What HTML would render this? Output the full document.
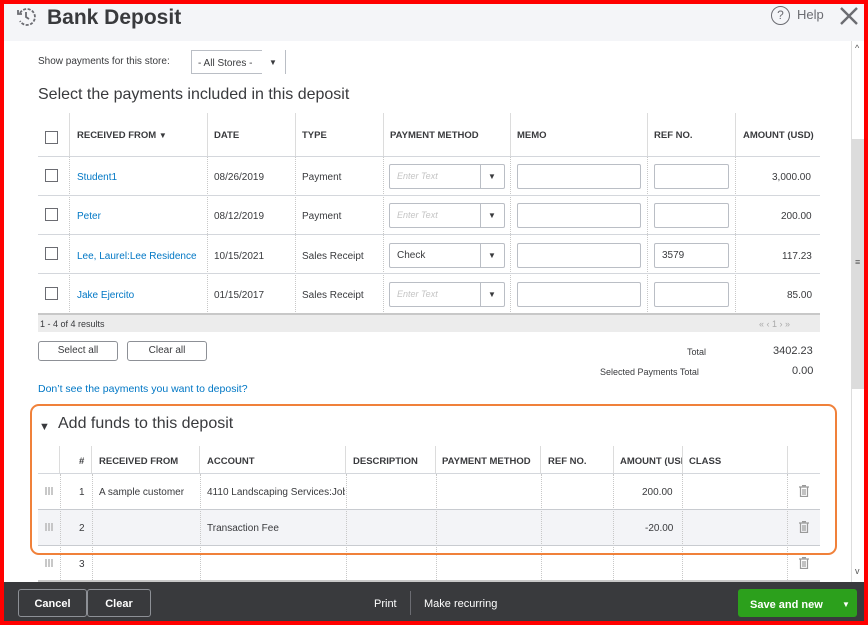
<!DOCTYPE html>
<html><head><meta charset="utf-8"><style>
*{box-sizing:border-box;margin:0;padding:0}
body{width:868px;height:625px;overflow:hidden;background:#fff;font-family:"Liberation Sans",sans-serif;color:#393a3d;position:relative}
.a{position:absolute}
.t{position:absolute;font-size:10px;white-space:nowrap;transform:translateY(1px)}
.h{position:absolute;font-size:9.5px;font-weight:bold;white-space:nowrap;color:#393a3d;transform:translateY(1px)}
.lnk{color:#0077c5}
.vl{position:absolute;border-left:1px dotted #c8c8c8}
.vs{position:absolute;border-left:1px solid #dcdcdc}
.hl{position:absolute;height:1px;background:#d4d7dc}
.cb{position:absolute;width:13px;height:13px;border:1px solid #6b6c72;background:#fff}
.in{position:absolute;height:25px;border:1px solid #babec5;background:#fff;border-radius:2px;font-size:10px;padding:6px 7px}
.ph{color:#c4c4c4;font-style:italic;font-size:9px}
.dd{position:absolute;font-size:8px}
.btn{position:absolute;border:1px solid #8d9096;border-radius:3px;background:#fff;font-size:10px;text-align:center;line-height:18px;height:20px}
.trash{position:absolute;width:10px;height:12px}
.grip{position:absolute;width:8px;height:8px;background:repeating-linear-gradient(90deg,#bbb 0 2px,transparent 2px 3px);opacity:.8}
</style></head><body>
<div class="a" style="left:0;top:0;width:868px;height:625px;border:4px solid #f00;z-index:10;pointer-events:none"></div>
<div class="a" style="left:4px;top:4px;width:860px;height:37px;background:#f4f5f8"></div>
<svg class="a" style="left:16px;top:7px" width="20" height="20" viewBox="0 0 20 20" fill="none" stroke="#6b6c72" stroke-width="1.8"><path d="M4 6A8 8 0 1 1 4 14" stroke-dasharray="3 1.5"/><path d="M10 5v5l3 2"/><path d="M2 3v4h4"/></svg>
<div class="a" style="left:47px;top:6px;font-size:21px;font-weight:bold;color:#393a3d">Bank Deposit</div>
<div class="a" style="left:771px;top:6px;width:19px;height:19px;border:1.8px solid #6b6c72;border-radius:50%;font-size:12px;text-align:center;line-height:16px;color:#6b6c72">?</div>
<div class="a" style="left:797px;top:7px;font-size:13px;color:#6b6c72">Help</div>
<svg class="a" style="left:839px;top:6px" width="20" height="20" viewBox="0 0 20 20" stroke="#6b6c72" stroke-width="2.4"><path d="M2 2L18 18M18 2L2 18"/></svg>
<div class="a" style="left:851px;top:41px;width:15px;height:541px;background:#fff;border-left:1px solid #ddd"></div>
<div class="a" style="left:852px;top:139px;width:13px;height:250px;background:#dcdcdc"></div>
<div class="t" style="left:855px;top:42px;font-size:9px;color:#555">^</div>
<div class="t" style="left:855px;top:565px;font-size:9px;color:#555">v</div>
<div class="t" style="left:855px;top:256px;font-size:9px;color:#555">≡</div>
<div class="t" style="left:38px;top:55px">Show payments for this store:</div>
<div class="a" style="left:191px;top:50px;width:71px;height:24px;border:1px solid #babec5;border-right:none;background:#fff"></div>
<div class="a" style="left:285px;top:50px;width:1px;height:24px;background:#babec5"></div>
<div class="t" style="left:198px;top:57px">- All Stores -</div>
<div class="dd" style="left:269px;top:58px">▼</div>
<div class="a" style="left:38px;top:86px;font-size:16px">Select the payments included in this deposit</div>
<div class="vs" style="left:69px;top:113px;height:43px"></div>
<div class="vs" style="left:207px;top:113px;height:43px"></div>
<div class="vs" style="left:295px;top:113px;height:43px"></div>
<div class="vs" style="left:383px;top:113px;height:43px"></div>
<div class="vs" style="left:510px;top:113px;height:43px"></div>
<div class="vs" style="left:647px;top:113px;height:43px"></div>
<div class="vs" style="left:735px;top:113px;height:43px"></div>
<div class="vl" style="left:69px;top:157px;height:157px"></div>
<div class="vl" style="left:207px;top:157px;height:157px"></div>
<div class="vl" style="left:295px;top:157px;height:157px"></div>
<div class="vl" style="left:383px;top:157px;height:157px"></div>
<div class="vl" style="left:510px;top:157px;height:157px"></div>
<div class="vl" style="left:647px;top:157px;height:157px"></div>
<div class="vl" style="left:735px;top:157px;height:157px"></div>
<div class="cb" style="left:45px;top:131px"></div>
<div class="h" style="left:77px;top:129px">RECEIVED FROM <span style="font-size:8px">▼</span></div>
<div class="h" style="left:214px;top:129px">DATE</div>
<div class="h" style="left:302px;top:129px">TYPE</div>
<div class="h" style="left:390px;top:129px">PAYMENT METHOD</div>
<div class="h" style="left:517px;top:129px">MEMO</div>
<div class="h" style="left:654px;top:129px">REF NO.</div>
<div class="h" style="left:743px;top:129px">AMOUNT (USD)</div>
<div class="hl" style="left:38px;top:156px;width:782px"></div>
<div class="hl" style="left:38px;top:195px;width:782px"></div>
<div class="hl" style="left:38px;top:234px;width:782px"></div>
<div class="hl" style="left:38px;top:273px;width:782px"></div>
<div class="hl" style="left:38px;top:313px;width:782px;height:2px;background:#c8c8c8"></div>

<div class="cb" style="left:45px;top:169px"></div>
<div class="t lnk" style="left:77px;top:171px">Student1</div>
<div class="t" style="left:214px;top:171px">08/26/2019</div>
<div class="t" style="left:302px;top:171px">Payment</div>
<div class="in" style="left:389px;top:164px;width:116px"><span class="ph">Enter Text</span></div>
<div class="a" style="left:480px;top:164px;width:1px;height:25px;background:#babec5"></div><div class="dd" style="left:488px;top:172px">▼</div>
<div class="in" style="left:517px;top:164px;width:124px"></div>
<div class="in" style="left:654px;top:164px;width:75px"></div>
<div class="t" style="left:772px;top:171px">3,000.00</div>

<div class="cb" style="left:45px;top:208px"></div>
<div class="t lnk" style="left:77px;top:210px">Peter</div>
<div class="t" style="left:214px;top:210px">08/12/2019</div>
<div class="t" style="left:302px;top:210px">Payment</div>
<div class="in" style="left:389px;top:203px;width:116px"><span class="ph">Enter Text</span></div>
<div class="a" style="left:480px;top:203px;width:1px;height:25px;background:#babec5"></div><div class="dd" style="left:488px;top:211px">▼</div>
<div class="in" style="left:517px;top:203px;width:124px"></div>
<div class="in" style="left:654px;top:203px;width:75px"></div>
<div class="t" style="left:781px;top:210px">200.00</div>

<div class="cb" style="left:45px;top:247px"></div>
<div class="t lnk" style="left:77px;top:250px">Lee, Laurel:Lee Residence</div>
<div class="t" style="left:214px;top:250px">10/15/2021</div>
<div class="t" style="left:302px;top:250px">Sales Receipt</div>
<div class="in" style="left:389px;top:243px;width:116px">Check</div>
<div class="a" style="left:480px;top:243px;width:1px;height:25px;background:#babec5"></div><div class="dd" style="left:488px;top:251px">▼</div>
<div class="in" style="left:517px;top:243px;width:124px"></div>
<div class="in" style="left:654px;top:243px;width:75px">3579</div>
<div class="t" style="left:782px;top:250px">117.23</div>

<div class="cb" style="left:45px;top:287px"></div>
<div class="t lnk" style="left:77px;top:289px">Jake Ejercito</div>
<div class="t" style="left:214px;top:289px">01/15/2017</div>
<div class="t" style="left:302px;top:289px">Sales Receipt</div>
<div class="in" style="left:389px;top:282px;width:116px"><span class="ph">Enter Text</span></div>
<div class="a" style="left:480px;top:282px;width:1px;height:25px;background:#babec5"></div><div class="dd" style="left:488px;top:290px">▼</div>
<div class="in" style="left:517px;top:282px;width:124px"></div>
<div class="in" style="left:654px;top:282px;width:75px"></div>
<div class="t" style="left:787px;top:289px">85.00</div>

<div class="a" style="left:38px;top:315px;width:782px;height:17px;background:#ececec"></div>
<div class="t" style="left:40px;top:318px;font-size:9px">1 - 4 of 4 results</div>
<div class="t" style="left:759px;top:318px;font-size:9px;color:#aaa">« ‹ 1 › »</div>

<div class="btn" style="left:38px;top:341px;width:80px">Select all</div>
<div class="btn" style="left:127px;top:341px;width:80px">Clear all</div>
<div class="t" style="left:687px;top:346px;font-size:9px">Total</div>
<div class="t" style="left:773px;top:344px;font-size:11px">3402.23</div>
<div class="t" style="left:600px;top:366px;font-size:9px">Selected Payments Total</div>
<div class="t" style="left:792px;top:364px;font-size:11px">0.00</div>
<div class="t lnk" style="left:38px;top:382px;font-size:10.5px">Don’t see the payments you want to deposit?</div>

<div class="a" style="left:30px;top:404px;width:807px;height:151px;border:2px solid #f0813a;border-radius:9px;z-index:5"></div>
<div class="t" style="left:39px;top:420px;font-size:11px">▼</div>
<div class="a" style="left:58px;top:415px;font-size:16px">Add funds to this deposit</div>
<div class="a" style="left:38px;top:509px;width:782px;height:36px;background:#f3f4f7"></div>
<div class="vs" style="left:59px;top:446px;height:27px"></div>
<div class="vs" style="left:91px;top:446px;height:27px"></div>
<div class="vs" style="left:199px;top:446px;height:27px"></div>
<div class="vs" style="left:345px;top:446px;height:27px"></div>
<div class="vs" style="left:435px;top:446px;height:27px"></div>
<div class="vs" style="left:540px;top:446px;height:27px"></div>
<div class="vs" style="left:613px;top:446px;height:27px"></div>
<div class="vs" style="left:682px;top:446px;height:27px"></div>
<div class="vs" style="left:787px;top:446px;height:27px"></div>
<div class="vl" style="left:60px;top:474px;height:108px"></div>
<div class="vl" style="left:92px;top:474px;height:108px"></div>
<div class="vl" style="left:200px;top:474px;height:108px"></div>
<div class="vl" style="left:346px;top:474px;height:108px"></div>
<div class="vl" style="left:436px;top:474px;height:108px"></div>
<div class="vl" style="left:541px;top:474px;height:108px"></div>
<div class="vl" style="left:613px;top:474px;height:108px"></div>
<div class="vl" style="left:682px;top:474px;height:108px"></div>
<div class="vl" style="left:787px;top:474px;height:108px"></div>
<div class="h" style="left:79px;top:455px">#</div>
<div class="h" style="left:99px;top:455px">RECEIVED FROM</div>
<div class="h" style="left:207px;top:455px">ACCOUNT</div>
<div class="h" style="left:353px;top:455px">DESCRIPTION</div>
<div class="h" style="left:442px;top:455px">PAYMENT METHOD</div>
<div class="h" style="left:548px;top:455px">REF NO.</div>
<div class="h" style="left:620px;top:455px;width:62px;overflow:hidden">AMOUNT (USD)</div>
<div class="h" style="left:689px;top:455px">CLASS</div>
<div class="hl" style="left:38px;top:473px;width:782px"></div>
<div class="hl" style="left:38px;top:509px;width:782px;background:#c8cbd0"></div>
<div class="hl" style="left:38px;top:545px;width:782px;background:#c8cbd0"></div>
<div class="hl" style="left:38px;top:580px;width:782px;height:2px;background:#c8c8c8"></div>

<div class="grip" style="left:45px;top:487px"></div>
<div class="t" style="left:79px;top:486px">1</div>
<div class="t" style="left:99px;top:486px">A sample customer</div>
<div class="t" style="left:207px;top:486px;width:138px;overflow:hidden">4110 Landscaping Services:Job</div>
<div class="t" style="left:642px;top:486px">200.00</div>
<div class="grip" style="left:45px;top:523px"></div>
<div class="t" style="left:79px;top:522px">2</div>
<div class="t" style="left:207px;top:522px">Transaction Fee</div>
<div class="t" style="left:645px;top:522px">-20.00</div>
<div class="grip" style="left:45px;top:559px"></div>
<div class="t" style="left:79px;top:558px">3</div>
<svg class="trash" style="left:799px;top:485px" viewBox="0 0 10 12" fill="none" stroke="#999" stroke-width="1.2"><path d="M0 2h10M3 0.6h4M1.5 2.5v9h7v-9M4 4v6M6 4v6"/></svg>
<svg class="trash" style="left:799px;top:521px" viewBox="0 0 10 12" fill="none" stroke="#999" stroke-width="1.2"><path d="M0 2h10M3 0.6h4M1.5 2.5v9h7v-9M4 4v6M6 4v6"/></svg>
<svg class="trash" style="left:799px;top:557px" viewBox="0 0 10 12" fill="none" stroke="#999" stroke-width="1.2"><path d="M0 2h10M3 0.6h4M1.5 2.5v9h7v-9M4 4v6M6 4v6"/></svg>

<div class="a" style="left:4px;top:582px;width:860px;height:39px;background:#393a3d"></div>
<div class="a" style="left:18px;top:589px;width:69px;height:28px;border:1px solid #8d9096;border-radius:3px;color:#fff;font-size:11px;font-weight:bold;text-align:center;line-height:28px">Cancel</div>
<div class="a" style="left:87px;top:589px;width:64px;height:28px;border:1px solid #8d9096;border-radius:3px;color:#fff;font-size:11px;font-weight:bold;text-align:center;line-height:28px">Clear</div>
<div class="t" style="left:374px;top:597px;color:#fff;font-size:11px">Print</div>
<div class="a" style="left:410px;top:591px;width:1px;height:24px;background:#6b6c72"></div>
<div class="t" style="left:424px;top:597px;color:#fff;font-size:11px">Make recurring</div>
<div class="a" style="left:738px;top:589px;width:119px;height:28px;background:#2ca01c;border-radius:3px"></div>
<div class="t" style="left:750px;top:598px;color:#fff;font-size:11px;font-weight:bold">Save and new</div>
<div class="dd" style="left:842px;top:600px;color:#fff">▼</div>
</body></html>
